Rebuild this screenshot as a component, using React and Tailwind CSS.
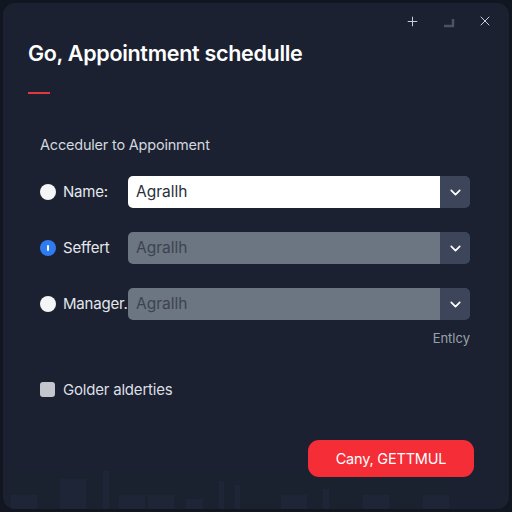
import React from 'react';
import { Plus, X, ChevronDown } from 'lucide-react';

const fields = [
  { id: 'name', label: 'Name:', value: 'Agrallh', active: true, radio: 'white' },
  { id: 'seffert', label: 'Seffert', value: 'Agrallh', active: false, radio: 'blue' },
  { id: 'manager', label: 'Manager.', value: 'Agrallh', active: false, radio: 'white' },
];

const Radio = ({ kind }) =>
  kind === 'blue' ? (
    <span className="w-4 h-4 rounded-full bg-[#2f7cf0] flex items-center justify-center">
      <span className="w-[2px] h-[6px] bg-white rounded-full" />
    </span>
  ) : (
    <span className="w-4 h-4 rounded-full bg-[#f4f5f7]" />
  );

const SelectRow = ({ field }) => (
  <div className="flex items-center h-8">
    <div className="w-[88px] flex items-center gap-[7px]">
      <Radio kind={field.radio} />
      <span className="text-[15px] text-[#e4e7ec] tracking-[-0.2px]">{field.label}</span>
    </div>
    <div className="flex-1 flex h-8 rounded-[5px] overflow-hidden">
      <div
        className={`flex-1 flex items-center pl-[8px] text-[15.5px] ${
          field.active ? 'bg-white text-[#2a2f3a]' : 'bg-[#6c7582] text-[#3c4350]'
        }`}
      >
        {field.value}
      </div>
      <div className="w-[30px] bg-[#3c455a] flex items-center justify-center">
        <ChevronDown size={17} strokeWidth={2.4} className="text-white" />
      </div>
    </div>
  </div>
);

export default function App() {
  return (
    <div className="w-[512px] h-[512px] bg-[#121620] p-[3px] font-['Inter','Liberation_Sans',sans-serif]">
      <div className="relative w-full h-full rounded-[12px] bg-[#1b2130] overflow-hidden flex flex-col">
        {/* window controls */}
        <div className="flex justify-end items-center gap-[21px] pt-[8px] pr-[16px] h-[28px] text-[#c9ced8]">
          <Plus size={15} strokeWidth={1.6} />
          <svg width="15" height="15" viewBox="0 0 15 15">
            <path d="M3 12h9V5" fill="none" stroke="#4a5263" strokeWidth="2.5" />
          </svg>
          <X size={16} strokeWidth={1.5} />
        </div>

        <h1 className="mt-[8px] pl-[25px] text-[21.5px] font-semibold text-white tracking-[-0.3px] leading-7">
          Go, Appointment schedulle
        </h1>
        <div className="ml-[25px] mt-[25px] w-[22px] h-[2px] bg-[#e2373c]" />

        <div className="pl-[37px] pr-[39px] flex flex-col">
          <p className="mt-[41px] text-[14.5px] text-[#d3d7df] tracking-[-0.2px] leading-5">
            Acceduler to Appoinment
          </p>
          <div className="mt-[21px] flex flex-col gap-[24px]">
            {fields.map((f) => (
              <SelectRow key={f.id} field={f} />
            ))}
          </div>
          <div className="mt-[9px] text-right text-[13px] text-[#9aa1ad]">Entlcy</div>

          <label className="mt-[30px] flex items-center gap-[8px]">
            <span className="w-[15px] h-[15px] rounded-[3px] bg-[#c3c6cd]" />
            <span className="text-[15px] text-[#dcdfe5] tracking-[-0.2px]">Golder alderties</span>
          </label>
        </div>

        <div className="mt-auto mb-[32px] flex justify-end pr-[35px]">
          <button className="w-[166px] h-[37px] rounded-[11px] bg-[#f42d37] text-white text-[14.5px] tracking-[-0.2px]">
            Cany, GETTMUL
          </button>
        </div>

        {/* faint bar chart along the bottom edge */}
        <svg className="absolute left-0 bottom-0" width="506" height="40" viewBox="0 0 506 40">
          <g fill="#27314a" opacity="0.3">
            <rect x="8" y="26" width="26" height="14" />
            <rect x="57" y="10" width="26" height="30" />
            <rect x="100" y="2" width="6" height="38" />
            <rect x="116" y="26" width="26" height="14" />
            <rect x="145" y="26" width="26" height="14" />
            <rect x="183" y="30" width="17" height="10" />
            <rect x="216" y="12" width="5" height="28" />
            <rect x="232" y="16" width="5" height="24" />
            <rect x="278" y="26" width="26" height="14" />
            <rect x="320" y="20" width="6" height="20" />
            <rect x="360" y="26" width="26" height="14" />
            <rect x="420" y="26" width="26" height="14" />
          </g>
        </svg>
      </div>
    </div>
  );
}
